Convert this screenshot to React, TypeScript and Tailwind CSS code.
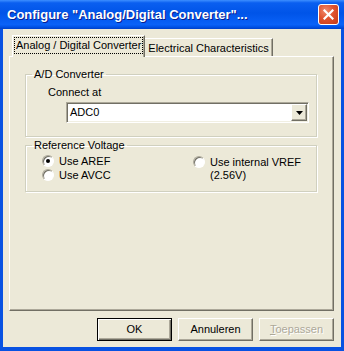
import { ReactNode } from 'react';

const raised =
  'border border-t-white border-l-white border-r-[#716F64] border-b-[#716F64] shadow-[inset_-1px_-1px_0_#ACA899]';

const Radio = ({ checked }: { checked?: boolean }) => (
  <span className="flex items-center justify-center w-[12px] h-[12px] shrink-0 rounded-full bg-white border border-t-[#ACA899] border-l-[#ACA899] border-r-white border-b-white shadow-[inset_1px_1px_0_#716F64]">
    {checked && <span className="w-[4px] h-[4px] rounded-full bg-black" />}
  </span>
);

const RadioRow = ({ checked, children }: { checked?: boolean; children: ReactNode }) => (
  <div className="flex items-center gap-[5px] h-[14px]">
    <Radio checked={checked} />
    <span className="leading-[13px]">{children}</span>
  </div>
);

const GroupBox = ({ title, className, children }: { title: string; className?: string; children: ReactNode }) => (
  <fieldset
    className={`border border-[#D0D0BF] shadow-[inset_1px_1px_0_#fff,1px_1px_0_#fff] ${className ?? ''}`}
  >
    <legend className="ml-[6px] px-[2px] leading-[13px]">{title}</legend>
    {children}
  </fieldset>
);

const TitleBar = () => (
  <div className="h-[29px] shrink-0 flex items-center justify-between pl-[7px] pr-[5px] bg-[linear-gradient(to_bottom,#3d8fff_0%,#0a5ff0_10%,#0054e8_45%,#0a62f8_85%,#0052e6_93%,#0040c8_100%)]">
    <span className="font-bold text-[13px] text-white [text-shadow:1px_1px_0_#0a1e8f] whitespace-nowrap">
      Configure &quot;Analog/Digital Converter&quot;...
    </span>
    <span className="flex items-center justify-center w-[21px] h-[21px] rounded-[3px] border border-white bg-[radial-gradient(circle_at_35%_30%,#f08a6c_0%,#e0532f_45%,#c43a16_100%)]">
      <svg width="11" height="11" viewBox="0 0 11 11">
        <path d="M1.5 1.5 L9.5 9.5 M9.5 1.5 L1.5 9.5" stroke="white" strokeWidth="2.2" strokeLinecap="square" />
      </svg>
    </span>
  </div>
);

const Button = ({ label, primary, disabled }: { label: ReactNode; primary?: boolean; disabled?: boolean }) => (
  <div
    className={`w-[75px] h-[23px] flex items-center justify-center bg-[#ECE9D8] ${
      primary
        ? 'border border-black shadow-[inset_1px_1px_0_#fff,inset_-1px_-1px_0_#716F64,inset_-2px_-2px_0_#ACA899]'
        : raised
    } ${disabled ? 'text-[#ACA899] [text-shadow:1px_1px_0_#fff]' : 'text-black'}`}
  >
    {label}
  </div>
);

export default function App() {
  return (
    <div className="w-[344px] h-[351px] flex flex-col font-['Liberation_Sans',Arial,sans-serif] text-[11px] text-black select-none">
      <TitleBar />
      <div className="flex-1 flex flex-col bg-[#ECE9D8] border-x-[3px] border-b-[4px] border-[#0852e2] pt-[6px] pl-[6px] pr-[7px] pb-[6px]">
        <div className="relative z-10 flex items-end h-[21px] pl-[3px]">
          <div className="-mb-[1px] h-[22px] px-[1px] pt-[1px] pb-[3px] bg-[#ECE9D8] border-t border-l border-t-white border-l-white border-r border-r-[#716F64] shadow-[inset_-1px_0_0_#ACA899]">
            <span className="flex items-center h-full px-[1px] border border-dotted border-black whitespace-nowrap">
              Analog / Digital Converter
            </span>
          </div>
          <div className="h-[18px] flex items-center px-[3px] pt-[1px] border-t border-t-white border-r border-r-[#716F64] shadow-[inset_-1px_0_0_#ACA899] whitespace-nowrap">
            Electrical Characteristics
          </div>
        </div>
        <div className={`flex-1 flex flex-col pt-[11px] pl-[15px] pr-[16px] ${raised}`}>
          <GroupBox title="A/D Converter" className="pb-[13px]">
            <div className="pl-[22px] mt-[5px] leading-[13px]">Connect at</div>
            <div className="ml-[40px] mr-[7px] mt-[3px] h-[21px] p-[1px] flex bg-white border border-t-[#ACA899] border-l-[#ACA899] border-r-white border-b-white shadow-[inset_1px_1px_0_#716F64,inset_-1px_-1px_0_#F1EFE2]">
              <span className="flex-1 flex items-center pl-[2px]">ADC0</span>
              <span className={`w-[16px] flex items-center justify-center bg-[#ECE9D8] ${raised}`}>
                <svg width="7" height="4" viewBox="0 0 7 4">
                  <path d="M0 0 H7 L3.5 4 Z" fill="black" />
                </svg>
              </span>
            </div>
          </GroupBox>
          <GroupBox title="Reference Voltage" className="mt-[2px] pb-[9px]">
            <div className="flex pl-[16px] mt-[2px]">
              <div className="w-[151px] flex flex-col">
                <RadioRow checked>Use AREF</RadioRow>
                <RadioRow>Use AVCC</RadioRow>
              </div>
              <div className="flex items-start gap-[5px] mt-[2px]">
                <Radio />
                <span className="leading-[13px]">
                  Use internal VREF
                  <br />
                  (2.56V)
                </span>
              </div>
            </div>
          </GroupBox>
        </div>
        <div className="flex justify-end gap-[6px] mt-[7px]">
          <Button label="OK" primary />
          <Button label="Annuleren" />
          <Button
            label={
              <span>
                <span className="underline">T</span>oepassen
              </span>
            }
            disabled
          />
        </div>
      </div>
    </div>
  );
}
